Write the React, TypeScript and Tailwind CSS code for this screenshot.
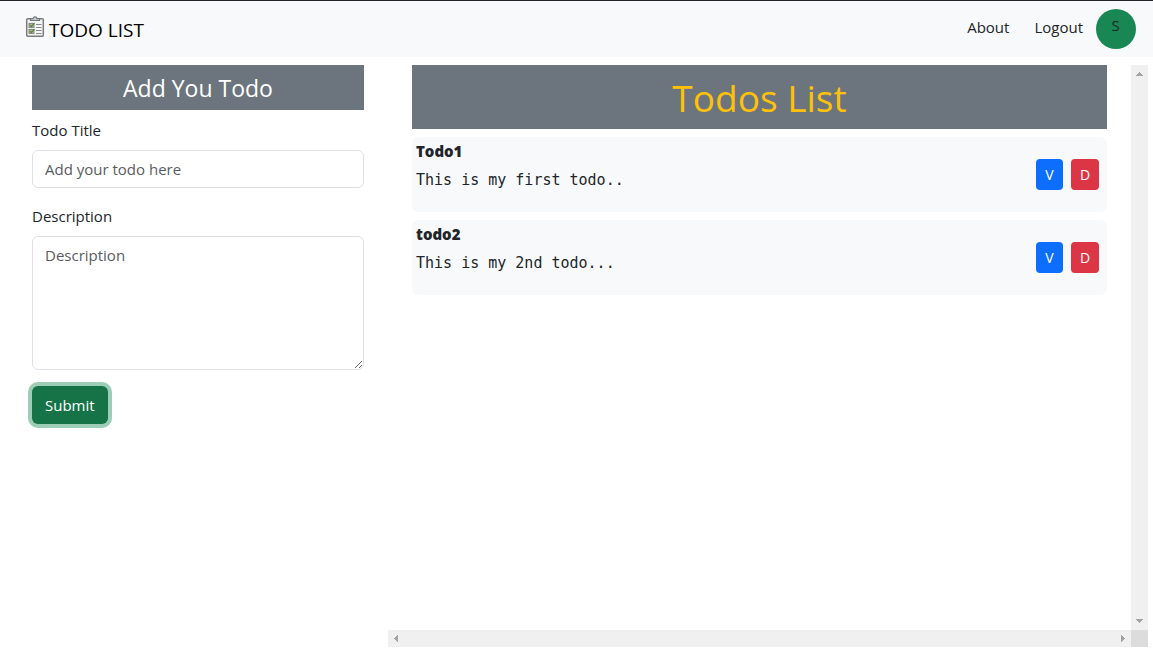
import React from "react";

type Todo = { title: string; description: string };

const todos: Todo[] = [
  { title: "Todo1", description: "This is my first todo.." },
  { title: "todo2", description: "This is my 2nd todo..." },
];

function ClipboardIcon() {
  return (
    <svg width="20" height="22" viewBox="0 0 20 22" fill="none" aria-hidden="true">
      <rect x="1.7" y="2.7" width="16.6" height="17.6" rx="1" fill="#f4f5f4" stroke="#7b7d7c" strokeWidth="1.5" />
      <path d="M5.5 4.5V2.6h2.4C8.200 1.200 8.900.8 10 .8s1.800.4 2.100 1.800h2.400v1.900z" fill="#c5c9ca" stroke="#74787a" strokeWidth="1.200" />
      <rect x="4" y="7.400" width="5" height="4" fill="#a9b98d" stroke="#7f8680" />
      <rect x="4" y="13.400" width="5" height="4" fill="#a9b98d" stroke="#7f8680" />
      <path d="M5 9.300l1.300 1.200L9.500 7M5 15.300l1.300 1.200L9.500 13" stroke="#547a3d" strokeWidth="1.100" />
      <path d="M11 8.500h5.500M11 11.500h5.500M11 14.500h5.500M11 17.500h5.500" stroke="#858b90" />
    </svg>
  );
}

function Arrow({ points }: { points: string }) {
  return (
    <svg width="17" height="17" viewBox="0 0 17 17" fill="#a3a3a3" shapeRendering="crispEdges" aria-hidden="true">
      <polygon points={points} />
    </svg>
  );
}

function Header() {
  return (
    <header className="flex h-[57px] items-center justify-between border-t border-[#212529] bg-[#f8f9fa] pr-[17px] pl-[25px]">
      <a href="#" className="flex items-center gap-1 text-[19px] leading-8 text-black">
        <span className="pb-1">
          <ClipboardIcon />
        </span>
        <span className="pt-px">TODO LIST</span>
      </a>
      <nav className="flex items-center gap-[13px]">
        <a href="#about" className="pr-3 pb-1">About</a>
        <a href="#logout" className="pb-1">Logout</a>
        <span className="flex size-10 justify-center rounded-full bg-[#198754] pt-1 pr-px">S</span>
      </nav>
    </header>
  );
}

function TodoForm() {
  return (
    <section className="px-6">
      <h2 className="bg-[#6c757d] pt-[5px] pb-1 text-center text-[23px] leading-9 text-white">Add You Todo</h2>
      <form className="flex flex-col items-start" onSubmit={(e) => e.preventDefault()}>
        <label htmlFor="title" className="mt-2 mb-2">Todo Title</label>
        <input
          id="title"
          type="text"
          placeholder="Add your todo here"
          className="h-[38px] w-full rounded-md border border-[#dee2e6] bg-white px-3 placeholder:text-[#595c5f]"
        />
        <label htmlFor="description" className="mt-4 mb-2">Description</label>
        <textarea
          id="description"
          rows={5}
          placeholder="Description"
          className="h-[134px] w-full resize rounded-md border border-[#dee2e6] bg-white px-3 py-1.5 placeholder:text-[#595c5f]"
        />
        <button type="submit" className="mt-4 h-[38px] rounded-md bg-[#157347] px-[13px] text-white ring-4 ring-[#9dcdb6]">
          Submit
        </button>
      </form>
    </section>
  );
}

function TodoCard({ todo }: { todo: Todo }) {
  return (
    <li className="flex items-center justify-between rounded-md bg-[#f8f9fa] pr-2 pl-1">
      <div className="pt-0.5 pb-5">
        <h3 className="font-extrabold">{todo.title}</h3>
        <p className="pt-[5px] font-['DejaVu_Sans_Mono',monospace] leading-6">{todo.description}</p>
      </div>
      <div className="flex gap-2 text-sm text-white">
        <button type="button" className="h-[31px] w-[27px] rounded bg-[#0d6efd]">V</button>
        <button type="button" className="h-[31px] w-7 rounded bg-[#dc3545]">D</button>
      </div>
    </li>
  );
}

function TodoList() {
  return (
    <section className="col-span-2 grid grid-cols-[1fr_17px] grid-rows-[1fr_17px]">
      <div className="px-6">
        <h1 className="bg-[#6c757d] pt-[9px] pb-[7px] text-center text-[37px] leading-[48px] text-[#ffc107]">Todos List</h1>
        <ul className="mt-2 flex flex-col gap-2">
          {todos.map((todo) => (
            <TodoCard key={todo.title} todo={todo} />
          ))}
        </ul>
      </div>
      <div className="flex flex-col justify-between bg-[#f0f0f0]">
        <Arrow points="5,11 8,7 9,7 12,11" />
        <Arrow points="5,6 12,6 9,10 8,10" />
      </div>
      <div className="flex justify-between bg-[#f0f0f0]">
        <Arrow points="10,5 10,12 6,9 6,8" />
        <Arrow points="7,5 7,12 11,9 11,8" />
      </div>
      <div className="bg-[#dcdcdc]" />
    </section>
  );
}

export default function App() {
  return (
    <div className="flex min-h-screen flex-col bg-white font-['Open_Sans',sans-serif] text-[15px] leading-6 text-[#212529]">
      <Header />
      <main className="mt-2 mr-[5px] mb-px ml-2 grid flex-1 grid-cols-3">
        <TodoForm />
        <TodoList />
      </main>
    </div>
  );
}
